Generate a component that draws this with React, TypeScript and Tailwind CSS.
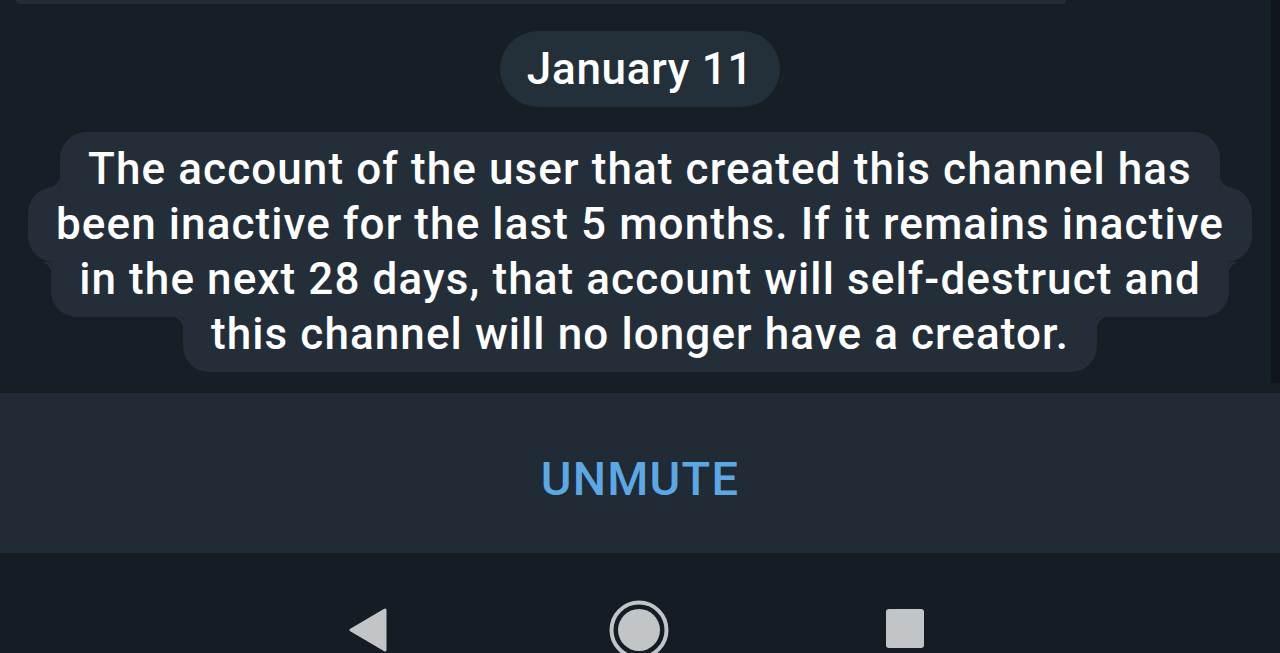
import React from 'react'

const BUBBLE = 'bg-[#232e39]'

const LINES: Array<{ text: string; fillets: 'bottom' | 'top' | null }> = [
  { text: 'The account of the user that created this channel has', fillets: 'bottom' },
  { text: 'been inactive for the last 5 months. If it remains inactive', fillets: null },
  { text: 'in the next 28 days, that account will self-destruct and', fillets: 'top' },
  { text: 'this channel will no longer have a creator.', fillets: 'top' },
]

function ServiceLine({ text, fillets, first }: { text: string; fillets: 'bottom' | 'top' | null; first: boolean }) {
  return (
    <div className={`relative w-fit whitespace-nowrap rounded-[26px] px-[28px] py-[10px] ${BUBBLE} ${first ? '' : '-mt-[20px]'}`}>
      {fillets === 'bottom' && (
        <>
          <div className="absolute bottom-[20px] -left-[12px] h-3 w-3 bg-[radial-gradient(circle_at_0_0,transparent_12px,#232e39_12.5px)]" />
          <div className="absolute bottom-[20px] -right-[12px] h-3 w-3 bg-[radial-gradient(circle_at_100%_0,transparent_12px,#232e39_12.5px)]" />
        </>
      )}
      {fillets === 'top' && (
        <>
          <div className="absolute top-[20px] -left-[12px] h-3 w-3 bg-[radial-gradient(circle_at_0_100%,transparent_12px,#232e39_12.5px)]" />
          <div className="absolute top-[20px] -right-[12px] h-3 w-3 bg-[radial-gradient(circle_at_100%_100%,transparent_12px,#232e39_12.5px)]" />
        </>
      )}
      <span className="relative z-10 block text-[44px] leading-[55px] font-medium tracking-[1.1px] text-white">{text}</span>
    </div>
  )
}

export default function App() {
  return (
    <div className="flex h-[653px] w-full flex-col overflow-hidden bg-[#161e26]" style={{ fontFamily: 'Roboto, "Noto Sans", sans-serif' }}>
      {/* chat area */}
      <div className="relative h-[393px] shrink-0">
        <div className="ml-4 h-[4px] w-[1050px] rounded-b-[6px] bg-[#222d38]" />
        <div className="absolute right-0 top-0 h-[383px] w-[9px] bg-[#10161c]" />

        <div className="mx-auto mt-[27px] w-fit rounded-full bg-[#232f39] px-[27px] text-[44px] leading-[76px] font-medium tracking-[0.7px] text-white">
          January 11
        </div>

        <div className="mt-[25px] flex flex-col items-center">
          {LINES.map((l, i) => (
            <ServiceLine key={i} text={l.text} fillets={l.fillets} first={i === 0} />
          ))}
        </div>
      </div>

      {/* bottom action */}
      <div className="flex h-[160px] shrink-0 items-center justify-center bg-[#212b36] pt-[12px]">
        <span className="text-[47px] font-medium tracking-[1.2px] text-[#5ba8e4]">UNMUTE</span>
      </div>

      {/* android nav */}
      <div className="flex flex-1 items-start bg-[#151c23] pl-[349px] pt-[47px]">
        <svg width="38" height="44" viewBox="0 0 38 44" className="mt-[8px]">
          <path d="M36 2 L36 42 L2 22 Z" fill="#c1c5c8" stroke="#c1c5c8" strokeWidth="3" strokeLinejoin="round" />
        </svg>
        <svg width="60" height="60" viewBox="0 0 60 60" className="ml-[222px]">
          <circle cx="30" cy="30" r="27.5" fill="none" stroke="#c1c5c8" strokeWidth="4" />
          <circle cx="30" cy="30" r="21" fill="#c1c5c8" />
        </svg>
        <div className="ml-[217px] mt-[9px] h-[39px] w-[38px] rounded-[3px] bg-[#c1c5c8]" />
      </div>
    </div>
  )
}
